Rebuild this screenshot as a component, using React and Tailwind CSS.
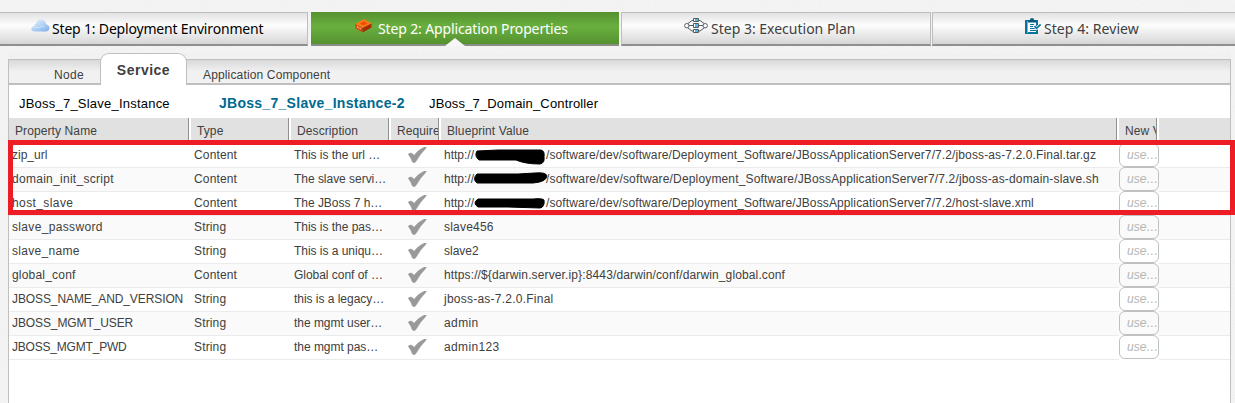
const rows = [
  { name: 'zip_url', nameTrack: 'tracking-normal', type: 'Content', desc: 'This is the url …', file: '/software/dev/software/Deployment_Software/JBossApplicationServer7/7.2/jboss-as-7.2.0.Final.tar.gz', track: 'tracking-[0.113px]', ink: 0 },
  { name: 'domain_init_script', nameTrack: 'tracking-[0.28px]', type: 'Content', desc: 'The slave servi…', file: '/software/dev/software/Deployment_Software/JBossApplicationServer7/7.2/jboss-as-domain-slave.sh', track: 'tracking-[0.16px]', ink: 1 },
  { name: 'host_slave', nameTrack: 'tracking-[0.4px]', type: 'Content', desc: 'The JBoss 7 h…', file: '/software/dev/software/Deployment_Software/JBossApplicationServer7/7.2/host-slave.xml', track: 'tracking-[0.113px]', ink: 2 },
  { name: 'slave_password', nameTrack: 'tracking-[0.34px]', type: 'String', desc: 'This is the pas…', value: 'slave456', track: 'tracking-[0.2px]' },
  { name: 'slave_name', nameTrack: 'tracking-[0.3px]', type: 'String', desc: 'This is a uniqu…', value: 'slave2', track: 'tracking-normal' },
  { name: 'global_conf', nameTrack: 'tracking-[0.2px]', type: 'Content', desc: 'Global conf of …', value: 'https://${darwin.server.ip}:8443/darwin/conf/darwin_global.conf', track: 'tracking-[0.13px]' },
  { name: 'JBOSS_NAME_AND_VERSION', nameTrack: 'tracking-[-0.1px]', type: 'String', desc: 'this is a legacy…', value: 'jboss-as-7.2.0.Final', track: 'tracking-[0.24px]' },
  { name: 'JBOSS_MGMT_USER', nameTrack: 'tracking-[-0.1px]', type: 'String', desc: 'the mgmt user…', value: 'admin', track: 'tracking-[0.4px]' },
  { name: 'JBOSS_MGMT_PWD', nameTrack: 'tracking-[-0.2px]', type: 'String', desc: 'the mgmt pas…', value: 'admin123', track: 'tracking-[0.36px]' },
];

const inks = [
  'M4 5 Q1 10 6 14 L43 14 Q52 18 67 18 Q72 17 71 11 Q72 5 68 4 L25 4 Z',
  'M4 4 Q-1 9 4 13 L60 13 Q73 12 74 6 Q73 2 62 3 L45 4 Z',
  'M5 5 Q-1 9 5 13 L35 13 L67 14 Q72 13 71 6 Q69 4 60 5 Z',
];

function Check() {
  return (
    <svg className="h-4 w-[19px]" viewBox="0 0 19 16">
      <path d="M.2 7.2Q1.6 5.4 4 6.2L6 8.3Q10.5 2.6 16.5 0Q18.8-.2 18.2 1Q11.9 7 8 14.6Q6 17 4.2 14.8Q2.8 10.4.2 7.2Z" fill="#999" stroke="#999" strokeWidth=".4" />
    </svg>
  );
}

function CloudIcon() {
  return (
    <svg className="h-[14px] w-[19px]" viewBox="0 0 19 14">
      <defs>
        <linearGradient id="cloud" x1="0" y1="0" x2=".8" y2="1">
          <stop offset="0" stopColor="#eaf3fc" />
          <stop offset=".5" stopColor="#b9d6f5" />
          <stop offset="1" stopColor="#85b3ea" />
        </linearGradient>
      </defs>
      <path d="M4 12.5Q0 12.5.3 9.6Q.8 7.5 3.2 7Q3 5 5 4.8Q6 .6 10 .5Q14.6.8 15 5Q18.4 6 18.5 9Q18 12.5 14.5 12.5Z" fill="url(#cloud)" />
      <path d="M3 9Q5 7 8 9Q10 6 13 8" fill="none" stroke="#dcebfa" strokeWidth="1" opacity=".7" />
    </svg>
  );
}

function BoxIcon() {
  return (
    <svg className="h-[14px] w-[17px]" viewBox="0 0 17 14">
      <path d="M0 5L9 0L16.5 4.5L7.5 9Z" fill="#f57a18" />
      <path d="M5 4.6L9.2 2.3L12.5 4.4L8 6.6Z" fill="#f24b06" />
      <path d="M0 5L7.5 9V13.5L.5 9.2Z" fill="#dd4208" />
      <path d="M7.5 9L16.5 4.5V8.4L7.5 13.5Z" fill="#a92b05" />
      <path d="M2 7.7L6 10" stroke="#ffd0b4" strokeWidth="1.4" strokeDasharray="1 .6" />
    </svg>
  );
}

function PlanIcon() {
  return (
    <svg className="h-[16px] w-[24px]" viewBox="0 0 24 16" fill="none" stroke="#555b60">
      <path d="M4 5.5L8 2.5H9M15 2.5H16L20 5.5M4 10L8 13H9M15 13H16L20 10M5 7.5H9M15 7.5H19" />
      <circle cx="2.8" cy="7.7" r="2.2" fill="#fff" />
      <circle cx="21.2" cy="7.7" r="2.2" fill="#fff" />
      <path d="M9.5.5H14.5V3.5H9.5ZM9.5 5.5H14.5V9.5H9.5ZM9.5 11.5H14.5V14.5H9.5Z" fill="#fff" />
      <path d="M11 2H14M11 13H14" stroke="#45bfe8" strokeWidth="2" />
      <path d="M11 7.5H14" stroke="#45bfe8" strokeWidth="3" />
    </svg>
  );
}

function ReviewIcon() {
  return (
    <svg className="h-[17px] w-[16px]" viewBox="0 0 16 17">
      <path d="M0 2H13V16H0Z" fill="#08749a" />
      <path d="M2 3H3V15H12V5H11V14H3V3H11V5H12V15H2Z" fill="#7fb5c9" />
      <path d="M3 3H11V14H3Z" fill="#fff" />
      <path d="M3 4.5V2H5L5.5.3H8.5L9 2H11V4.5Z" fill="#075a7c" />
      <path d="M5 6.5H9M5 8.5H8M5 10.5H10M5 12.5H11" stroke="#08749a" />
      <path d="M9.5 8L11.5 10.3L15.7 6.4" fill="none" stroke="#fff" strokeWidth="3" />
      <path d="M9.5 8L11.5 10.3L15.7 6.4" fill="none" stroke="#08749a" strokeWidth="1.8" />
    </svg>
  );
}

const stepBase = "relative flex h-[34px] shrink-0 items-start whitespace-pre border-b-2 font-['Noto_Sans',sans-serif] text-[14px] leading-[32px]";
const stepLight = 'border-t border-r border-t-[#bebebe] border-r-[#bebebe] border-b-[#8f8f8f] bg-linear-to-b from-[#e2e2e2] via-[#fdfdfd] via-40% to-[#d6d6d6]';

function HeadCell({ children }) {
  return (
    <div className="flex overflow-hidden border-r-2 border-white">
      <div className="w-full overflow-hidden border-r border-[#8f8f8f] pl-1.5 tracking-[0.1px] whitespace-nowrap">{children}</div>
    </div>
  );
}

const grid = 'grid grid-cols-[182px_100px_100px_50px_678px_40px_71px]';

export default function App() {
  return (
    <div className="relative h-[403px] w-[1235px] overflow-hidden bg-[#f5f5f5] pt-3 font-['Liberation_Sans',Arial,sans-serif] text-[12px] text-[#404040]">
      <svg className="absolute inset-0 h-full w-full opacity-[0.08]">
        <filter id="grain">
          <feTurbulence type="fractalNoise" baseFrequency="0.6" numOctaves="2" />
          <feColorMatrix type="saturate" values="0" />
        </filter>
        <rect width="100%" height="100%" filter="url(#grain)" />
      </svg>

      <div className="relative flex w-[1240px]">
        <div className={`${stepBase} ${stepLight} mr-[2px] w-[308px] pl-[31px] text-black`}>
          <span className="mt-[6px] mr-[2px] h-[14px] w-[19px]"><CloudIcon /></span>
          <span className="tracking-[-0.18px]">Step 1: Deployment Environment</span>
        </div>
        <div className={`${stepBase} mr-[2px] ml-px w-[308px] border-b-[#8a8f86] bg-linear-to-b from-[#55902f] via-[#69b03f] via-45% to-[#569130] pl-[44px] text-white`}>
          <span className="mt-[7px] mr-[6px] h-[14px] w-[17px]"><BoxIcon /></span>
          <span className="pt-px tracking-[-0.13px]">Step 2: Application Properties</span>
          <svg className="absolute -bottom-[2px] left-[134px] h-[8px] w-[20px]" viewBox="0 0 20 8"><path d="M0 8L10 0L20 8Z" fill="#f7f7f7" /></svg>
        </div>
        <div className={`${stepBase} ${stepLight} mr-px w-[310px] border-l border-l-[#bebebe] pl-[62px]`}>
          <span className="mt-[5px] mr-[3px] h-4 w-6"><PlanIcon /></span>
          <span>Step 3: Execution Plan</span>
        </div>
        <div className={`${stepBase} ${stepLight} w-[308px] border-l border-l-[#bebebe] pl-[92px]`}>
          <span className="mt-[5px] mr-[3px] h-[17px] w-4"><ReviewIcon /></span>
          <span className="tracking-[0.06px]">Step 4: Review</span>
        </div>
      </div>

      <div className="relative mt-[7px] ml-2 flex h-[32px] w-[1223px] flex-col bg-[#f1f1f1] pt-[6px]">
        <div className="flex h-[26px] items-end border border-b-2 border-[#bfbfbf] bg-linear-to-b from-[#d9d9d9] to-[#f1f1f1] to-50%">
          <div className="w-[91px] pl-[45px] leading-[16px] tracking-[0.3px]">Node</div>
          <div className="-mb-[2px] h-[32px] w-[87px] rounded-t-[9px] border border-b-0 border-[#bfbfbf] bg-white text-center text-[14px] leading-[33px] font-bold tracking-[0.5px]">Service</div>
          <div className="pl-4 leading-[16px] tracking-[0.15px]">Application Component</div>
        </div>
      </div>

      <div className="relative ml-2 h-[318px] w-[1223px] border-x border-[#bfbfbf] bg-white">
        <div className="flex h-[33px] items-center pt-1 text-[13px] text-black">
          <div className="w-[200px] pl-[10px] tracking-[0.22px]">JBoss_7_Slave_Instance</div>
          <div className="w-[210px] pl-[10px] text-[14px] font-bold tracking-[0.28px] text-[#006a91]">JBoss_7_Slave_Instance-2</div>
          <div className="pl-[10px] tracking-[0.15px]">JBoss_7_Domain_Controller</div>
        </div>
        <div className={`${grid} h-[25px] bg-[#e1e1e1] leading-[26px]`}>
          <HeadCell>Property Name</HeadCell>
          <HeadCell>Type</HeadCell>
          <HeadCell>Description</HeadCell>
          <HeadCell>Required</HeadCell>
          <HeadCell>Blueprint Value</HeadCell>
          <HeadCell>New Value</HeadCell>
          <div />
        </div>
        {rows.map((r, i) => (
          <div key={r.name} className={`${grid} h-6 whitespace-nowrap leading-[24px] ${i % 2 ? 'bg-[#fafafa]' : 'bg-white'}`}>
            <div className={`border-b border-[#ebebeb] pl-[3px] ${r.nameTrack}`}>{r.name}</div>
            <div className="border-b border-[#ebebeb] pl-[3px] tracking-[0.15px]">{r.type}</div>
            <div className="border-b border-[#ebebeb] pl-[3px] tracking-[-0.03px]">{r.desc}</div>
            <div className="border-b border-[#ebebeb] pt-[4px] pl-[17px]"><Check /></div>
            <div className={`flex border-b border-[#ebebeb] pl-[3px] ${r.track}`}>
              {r.file ? (
                <>
                  <span className="w-[29px] tracking-normal">http://</span>
                  <svg className="mt-[3px] h-5 w-[73px] shrink-0 overflow-visible" viewBox="0 0 73 20">
                    <path d={inks[r.ink]} fill="#000" stroke="#000" strokeWidth="1" strokeLinejoin="round" />
                  </svg>
                  <span>{r.file}</span>
                </>
              ) : r.value}
            </div>
            <div className="h-6 overflow-hidden rounded-[6px] border border-[#c0c0c0] pl-[7px] leading-[22px] text-[#b5b5b5] italic">use…</div>
            <div className="border-b border-[#ebebeb]" />
          </div>
        ))}
      </div>

      <div className="absolute top-[140px] left-2 h-[75px] w-[1227px] border-[5px] border-[#ee1c24]" />
    </div>
  );
}
